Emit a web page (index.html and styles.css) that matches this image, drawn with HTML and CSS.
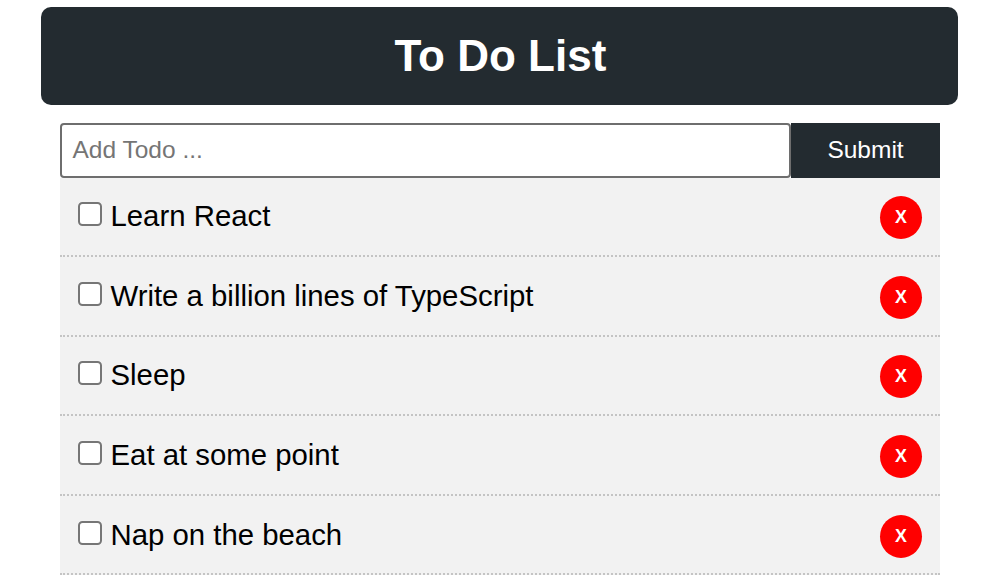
FILE: index.html
```html
<!DOCTYPE html>
<html lang="en">
<head>
<meta charset="utf-8">
<title>To Do List</title>
<link rel="stylesheet" href="styles.css">
</head>
<body>
<main class="app">
  <header class="header"><h1 class="title">To Do List</h1></header>
  <section class="content">
    <form class="form">
      <input class="field" type="text" placeholder="Add Todo ...">
      <button class="submit" type="button">Submit</button>
    </form>
    <ul class="list">
      <li class="item"><label class="label"><input class="check" type="checkbox"><span class="text">Learn React</span></label><button class="remove" type="button">X</button></li>
      <li class="item"><label class="label"><input class="check" type="checkbox"><span class="text">Write a billion lines of TypeScript</span></label><button class="remove" type="button">X</button></li>
      <li class="item"><label class="label"><input class="check" type="checkbox"><span class="text">Sleep</span></label><button class="remove" type="button">X</button></li>
      <li class="item"><label class="label"><input class="check" type="checkbox"><span class="text">Eat at some point</span></label><button class="remove" type="button">X</button></li>
      <li class="item"><label class="label"><input class="check" type="checkbox"><span class="text">Nap on the beach</span></label><button class="remove" type="button">X</button></li>
    </ul>
  </section>
</main>
</body>
</html>
```
FILE: styles.css
```css
* { box-sizing: border-box; }
body { margin: 0; background: #fff; color: #000; font-family: "Liberation Sans", Arial, sans-serif; overflow: hidden; }
.app { padding: 7px 41.6px 0 41.4px; }
.header { height: 98px; border-radius: 10px; background: #232b30; display: flex; align-items: center; justify-content: center; }
.title { margin: 0; padding-left: 1px; color: #fff; font-size: 44px; line-height: 50px; font-weight: 700; }
.content { padding: 18.4px 18.4px 0 18.6px; }
.form { display: flex; height: 54.2px; margin: 0; }
.field { flex: 1; min-width: 0; margin: 0; padding: 0 11px 0 10.5px; border: 2px solid #6e6e6e; border-radius: 4px; background: #fff; font: 24.5px "Liberation Sans", Arial, sans-serif; }
.field::placeholder { color: #757575; opacity: 1; }
.submit { width: 149px; padding: 0; border: 0; background: #232b30; color: #fff; font: 24.5px "Liberation Sans", Arial, sans-serif; }
.list { margin: 0; padding: 0; list-style: none; }
.item { display: flex; align-items: flex-start; justify-content: space-between; height: 79.55px; padding: 18.8px 18px 0; background: #f2f2f2; border-bottom: 2px dotted #c4c4c4; }
.label { display: flex; align-items: flex-start; gap: 8.5px; }
.check { appearance: none; width: 24px; height: 24px; margin: 6px 0 0; border: 2px solid #767676; border-radius: 4.5px; background: #fff; }
.text { font-size: 29.35px; line-height: 40px; }
.remove { width: 42px; height: 43px; padding: 0; border: 0; border-radius: 50%; background: #f00; color: #fff; font: 700 17.8px/43px "Liberation Sans", Arial, sans-serif; }
```
